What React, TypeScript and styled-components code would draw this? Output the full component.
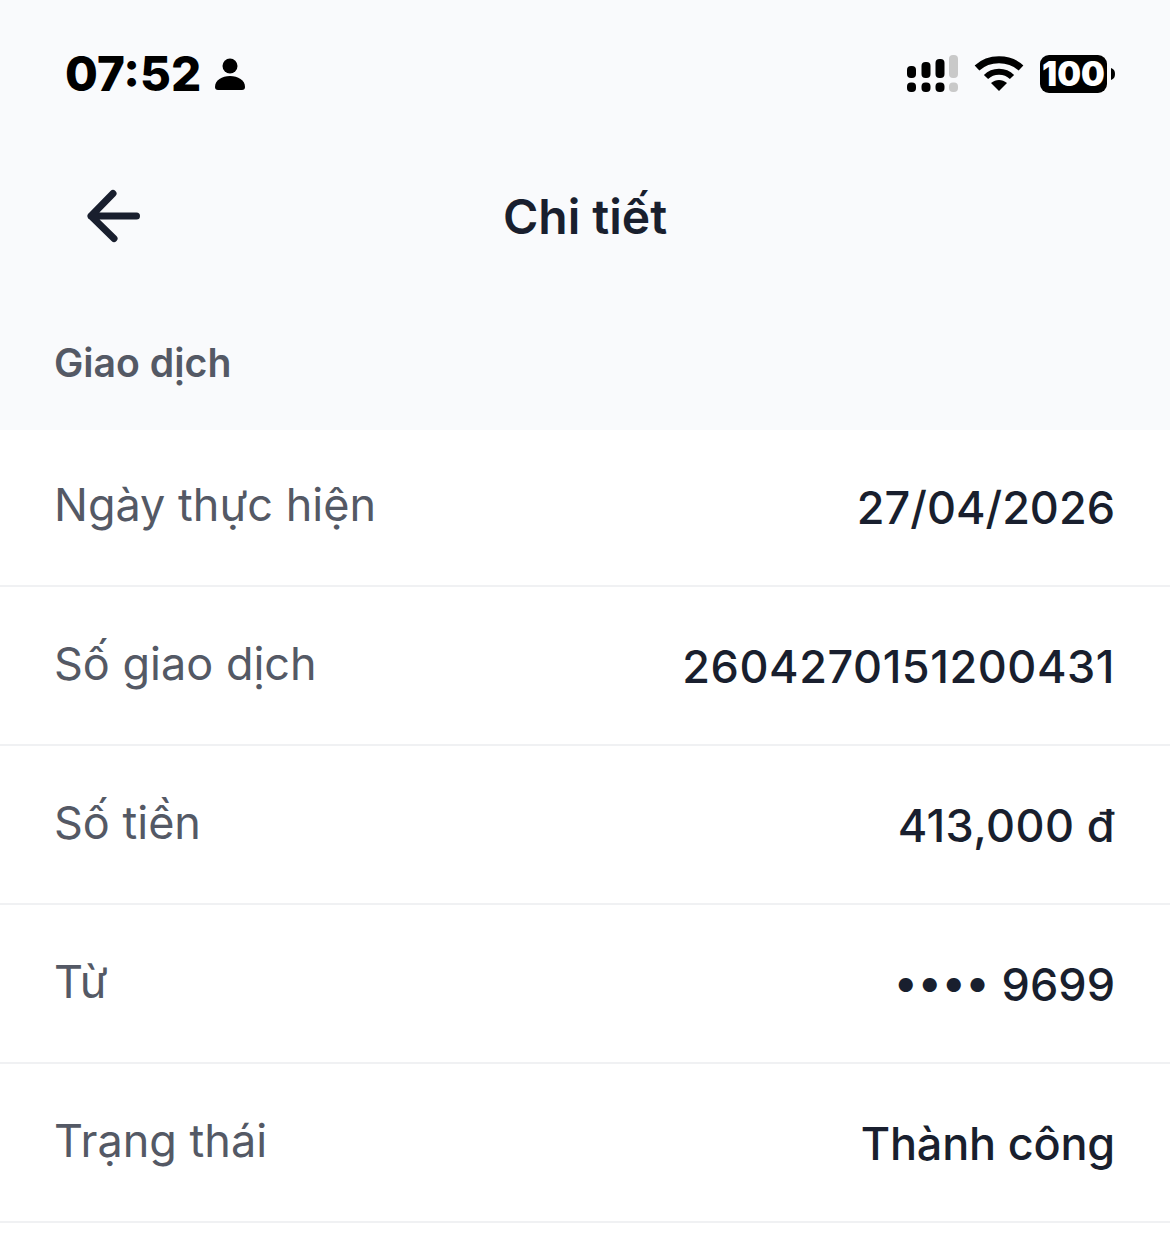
import React from "react";
import styled, { createGlobalStyle } from "styled-components";

const Global = createGlobalStyle`
  html, body { margin: 0; padding: 0; background: #fff; }
  body { font-family: Inter, "Noto Sans", sans-serif; }
`;

const Page = styled.div`
  width: 1170px;
  height: 1234px;
  overflow: hidden;
  background: #fff;
`;

const Top = styled.div`
  background: #f9fafc;
  height: 430px;
  display: flex;
  flex-direction: column;
`;

const StatusBar = styled.div`
  height: 148px;
  padding: 0 54px 0 65px;
  display: flex;
  justify-content: space-between;
  align-items: center;
  box-sizing: border-box;
`;

const StatusLeft = styled.div`
  display: flex;
  align-items: center;
  gap: 13px;
`;

const Clock = styled.span`
  font-size: 47.5px;
  font-weight: 800;
  color: #000;
  line-height: 48px;
`;

const StatusRight = styled.div`
  display: flex;
  align-items: center;
  gap: 16px;
`;

const NavBar = styled.div`
  height: 138px;
  padding-bottom: 2px;
  box-sizing: border-box;
  display: flex;
  align-items: center;
  justify-content: center;
  position: relative;
`;

const BackIcon = styled.svg`
  position: absolute;
  left: 84px;
  top: 41px;
`;

const NavTitle = styled.h1`
  margin: 0;
  font-size: 48px;
  font-weight: 600;
  color: #191f2e;
`;

const SectionTitle = styled.div`
  padding-left: 54px;
  font-size: 39.2px;
  font-weight: 600;
  line-height: 44px;
  color: #545965;
  padding-top: 55px;
`;

const List = styled.div`
  display: flex;
  flex-direction: column;
`;

const Row = styled.div`
  height: 159px;
  box-sizing: border-box;
  border-bottom: 2px solid #f0f1f3;
  padding: 2px 55px 0 54px;
  display: flex;
  justify-content: space-between;
  align-items: center;
  &:first-child {
    height: 157px;
    padding-top: 0;
  }
`;

const Label = styled.span`
  font-size: 45px;
  font-weight: 400;
  color: #545965;
  position: relative;
  top: -3px;
`;

const Value = styled.span<{ $tracking?: number }>`
  font-size: 45px;
  font-weight: 500;
  color: #191f2e;
  letter-spacing: ${(p) => p.$tracking ?? 0}px;
`;

const rows: { label: string; value: string; tracking?: number }[] = [
  { label: "Ngày thực hiện", value: "27/04/2026" },
  { label: "Số giao dịch", value: "2604270151200431", tracking: 0.55 },
  { label: "Số tiền", value: "413,000 đ", tracking: 0.4 },
  { label: "Từ", value: "•••• 9699" },
  { label: "Trạng thái", value: "Thành công", tracking: -0.2 },
];

export default function App() {
  return (
    <Page>
      <Global />
      <Top>
        <StatusBar>
          <StatusLeft>
            <Clock>07:52</Clock>
            <svg width="32" height="34" viewBox="0 0 32 34">
              <circle cx="16" cy="9" r="7.5" fill="#000" />
              <path d="M1 30c0-7 7-11 15-11s15 4 15 11c0 2-1 3-3 3H4c-2 0-3-1-3-3z" fill="#000" />
            </svg>
          </StatusLeft>
          <StatusRight>
            <svg width="51" height="38" viewBox="0 0 51 38">
              <rect x="0" y="11" width="9" height="12" rx="4" fill="#000" />
              <rect x="14.5" y="7" width="9" height="16" rx="4" fill="#000" />
              <rect x="28.5" y="4" width="9" height="19" rx="4" fill="#000" />
              <rect x="42" y="0" width="9" height="23" rx="4" fill="#c9c9c9" />
              <rect x="0" y="27.5" width="9" height="9.5" rx="4" fill="#000" />
              <rect x="14.5" y="27.5" width="9" height="9.5" rx="4" fill="#000" />
              <rect x="28.5" y="27.5" width="9" height="9.5" rx="4" fill="#000" />
              <rect x="42" y="27.5" width="9" height="9.5" rx="4" fill="#c9c9c9" />
            </svg>
            <svg width="50" height="38" viewBox="0 0 50 38" fill="none">
              <path d="M3 13C15 2 35 2 47 13" stroke="#000" strokeWidth="7" />
              <path d="M12 22C19 15 31 15 38 22" stroke="#000" strokeWidth="6" />
              <path d="M17 28C22 24 28 24 33 28L25 36z" fill="#000" />
            </svg>
            <svg width="76" height="38" viewBox="0 0 76 38">
              <rect x="0" y="0" width="67" height="38" rx="9" fill="#000" />
              <path d="M71 13c3 1 4 3 4 6s-1 5-4 6z" fill="#000" />
              <text x="33.5" y="31" textAnchor="middle" fontFamily="Inter, sans-serif" fontSize="33.5" fontWeight="900" fill="#fff">100</text>
            </svg>
          </StatusRight>
        </StatusBar>
        <NavBar>
          <BackIcon width="58" height="56" viewBox="0 0 58 56" fill="none" stroke="#191f2e" strokeWidth="7" strokeLinecap="round" strokeLinejoin="round">
            <path d="M52.5 27H7M29 4.5L7 27l23 22.5" />
          </BackIcon>
          <NavTitle>Chi tiết</NavTitle>
        </NavBar>
        <SectionTitle>Giao dịch</SectionTitle>
      </Top>
      <List>
        {rows.map((r) => (
          <Row key={r.label}>
            <Label>{r.label}</Label>
            <Value $tracking={r.tracking}>{r.value}</Value>
          </Row>
        ))}
      </List>
    </Page>
  );
}
